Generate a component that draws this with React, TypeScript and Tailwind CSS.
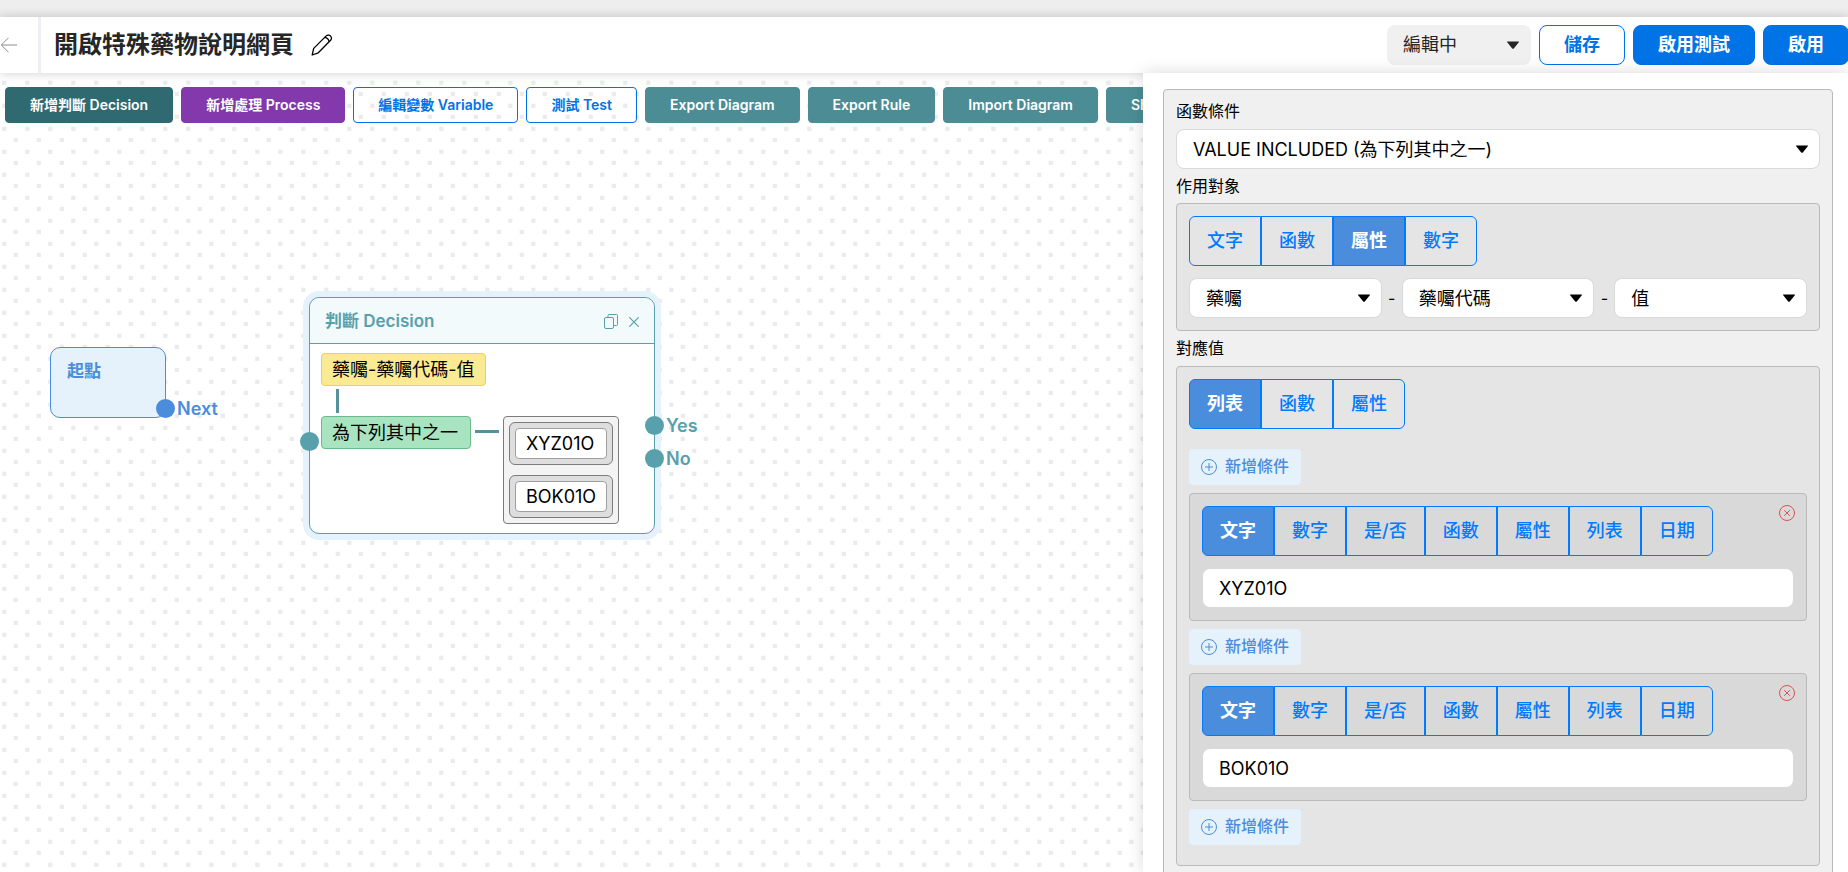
import React, { useState } from 'react';

function Caret({ className = 'text-black' }: { className?: string }) {
  return (
    <svg aria-hidden="true" viewBox="0 0 12 8" className={`pointer-events-none absolute right-3 top-1/2 h-2 w-3 -translate-y-1/2 ${className}`}>
      <path d="M0.4 0.4h11.2c0.4 0 0.5 0.5 0.2 0.9L7 7.2c-0.6 0.8-1.4 0.8-2 0L0.2 1.3C-0.1 0.9 0 0.4 0.4 0.4z" fill="currentColor" />
    </svg>
  );
}

function SelectBox({ label, options }: { label: string; options: string[] }) {
  return (
    <div className="relative min-w-0 flex-1">
      <select aria-label={label} className="block h-10 w-full appearance-none rounded-lg border border-[#d9d9d9] bg-white pl-4 pr-8 pt-0.5 text-lg leading-6 text-black">
        {options.map((o) => (
          <option key={o}>{o}</option>
        ))}
      </select>
      <Caret />
    </div>
  );
}

function Tabs({ items, initial }: { items: string[]; initial: string }) {
  const [active, setActive] = useState(initial);
  return (
    <div className="flex">
      {items.map((t) => (
        <button
          key={t}
          type="button"
          aria-pressed={t === active}
          onClick={() => setActive(t)}
          className={`h-[50px] border border-[#007bff] px-[17px] text-lg first:rounded-l-md last:rounded-r-md ${
            t === active ? 'bg-[#4a8ddc] font-bold text-white' : 'font-medium text-[#007bff]'
          }`}
        >
          {t}
        </button>
      ))}
    </div>
  );
}

function AddButton() {
  return (
    <button type="button" className="flex h-9 items-center gap-2 self-start rounded bg-[#e5f1fb] px-3 text-base font-medium text-[#4a8ddc]">
      <svg aria-hidden="true" viewBox="0 0 16 16" className="h-4 w-4" fill="none" stroke="currentColor">
        <circle cx="8" cy="8" r="7.5" />
        <path d="M8 4v8M4 8h8" />
      </svg>
      <span className="pb-0.5">新增條件</span>
    </button>
  );
}

const VALUE_TYPES = ['文字', '數字', '是/否', '函數', '屬性', '列表', '日期'];

function ConditionCard({ value }: { value: string }) {
  return (
    <div className="relative flex flex-col gap-3 rounded border border-[#bababa] bg-[#d9d9d9] p-3">
      <Tabs items={VALUE_TYPES} initial="文字" />
      <input aria-label="條件值" defaultValue={value} className="h-10 w-full rounded-lg border border-[#d9d9d9] bg-white px-4 text-lg text-black" />
      <button type="button" aria-label="刪除條件" className="absolute right-[11px] top-[11px] text-[#d9534f]">
        <svg aria-hidden="true" viewBox="0 0 16 16" className="block h-4 w-4" fill="none" stroke="currentColor">
          <circle cx="8" cy="8" r="7.5" />
          <path d="M5.2 5.2l5.6 5.6M10.8 5.2l-5.6 5.6" />
        </svg>
      </button>
    </div>
  );
}

function Header() {
  return (
    <header className="relative z-10 flex h-14 shrink-0 items-stretch bg-white shadow-[0_0_10px_rgba(0,0,0,0.2)]">
      <a href="#back" aria-label="返回" className="flex w-[38px] items-center text-[#8c8c8c]">
        <svg aria-hidden="true" viewBox="0 0 18 16" className="h-4 w-[18px]" fill="none" stroke="currentColor">
          <path d="M17 8H1.5M8.5 0.8L1.3 8l7.2 7.2" />
        </svg>
      </a>
      <div className="w-[3px] bg-[#eeeef5]" />
      <div className="flex flex-1 items-center gap-[17px] pl-[13px]">
        <h1 className="whitespace-nowrap text-2xl font-bold text-[#262626]">開啟特殊藥物說明網頁</h1>
        <button type="button" aria-label="編輯名稱" className="text-black">
          <svg aria-hidden="true" viewBox="0 0 22 22" className="block h-[22px] w-[22px]" fill="none" stroke="currentColor" strokeWidth="1.3" strokeLinejoin="round">
            <path d="M1.2 21l1.500-6.600L15.200 1.900a3 3 0 0 1 2.900-0.700c1.600 0.500 2.800 2.300 2.200 3.900a3 3 0 0 1-0.700 1.100L7.300 18.800z" />
            <path d="M13.700 3.400c2.200 0.300 4 2 4.400 4.300" />
          </svg>
        </button>
      </div>
      <div className="-mr-px flex items-center gap-2">
        <div className="relative w-36">
          <select aria-label="狀態" className="block h-10 w-full appearance-none rounded-lg bg-[#f0f0f0] pl-4 pr-8 text-lg leading-6 text-[#262626]">
            <option>編輯中</option>
          </select>
          <Caret className="text-[#262626]" />
        </div>
        <button type="button" className="h-10 rounded-lg border border-[#0073e6] bg-white px-6 text-lg font-bold text-[#0073e6]">儲存</button>
        <button type="button" className="h-10 rounded-lg border border-[#0073e6] bg-[#0073e6] px-6 text-lg font-bold text-white">啟用測試</button>
        <button type="button" className="h-10 rounded-lg border border-[#0073e6] bg-[#0073e6] px-6 text-lg font-bold text-white">啟用</button>
      </div>
    </header>
  );
}

const TOOLS: { label: string; style: string }[] = [
  { label: '新增判斷 Decision', style: 'border-[#2f6a70] bg-[#2f6a70] text-white' },
  { label: '新增處理 Process', style: 'border-[#8338ab] bg-[#8338ab] text-white' },
  { label: '編輯變數 Variable', style: 'border-[#0073e6] text-[#0073e6]' },
  { label: '測試 Test', style: 'border-[#0073e6] text-[#0073e6]' },
  { label: 'Export Diagram', style: 'border-[#4c8d95] bg-[#4c8d95] text-white' },
  { label: 'Export Rule', style: 'border-[#4c8d95] bg-[#4c8d95] text-white' },
  { label: 'Import Diagram', style: 'border-[#4c8d95] bg-[#4c8d95] text-white' },
  { label: 'Show', style: 'border-[#4c8d95] bg-[#4c8d95] text-white' },
];

function Tag({ value }: { value: string }) {
  return (
    <div className="rounded-md border border-[#7c7c7c] bg-[#dedede] p-[5px]">
      <div className="rounded-sm border border-[#a0a0a0] bg-white px-2.5 leading-[29px]">{value}</div>
    </div>
  );
}

function StartNode() {
  return (
    <div className="absolute left-[50px] top-[274px] h-[71px] w-[116px] rounded-[10px] border border-[#4a8ddc] bg-[#e5f1fb] px-4 py-[11px] text-[#4a8ddc]">
      <div className="text-[17px] font-bold leading-6">起點</div>
      <span className="absolute -right-[10px] top-[51px] h-[19px] w-[19px] rounded-full bg-[#4a8ddc]" />
      <span className="absolute left-[126px] top-[49px] text-lg font-semibold leading-6">Next</span>
    </div>
  );
}

function DecisionNode() {
  return (
    <div className="absolute left-[309px] top-[224px] h-[237px] w-[346px] rounded-[10px] border border-[#57a0ac] bg-white shadow-[0_0_0_6px_#e5f1fb]">
      <div className="flex h-[46px] items-center rounded-t-[10px] border-b border-[#57a0ac] bg-[#f3fafc] pl-[15px] pr-[15px] pt-0.5 text-[#57a0ac]">
        <h2 className="flex-1 text-[17px] font-semibold">判斷 Decision</h2>
        <button type="button" aria-label="複製" className="mr-[11px]">
          <svg aria-hidden="true" viewBox="0 0 14 15" className="block h-[15px] w-[14px]" fill="none" stroke="currentColor">
            <rect x="0.5" y="3.5" width="9" height="11" rx="1.5" />
            <path d="M4 3.5V1.5a1 1 0 0 1 1-1h7.500a1 1 0 0 1 1 1v9a1 1 0 0 1-1 1H9.500" />
          </svg>
        </button>
        <button type="button" aria-label="關閉">
          <svg aria-hidden="true" viewBox="0 0 10 10" className="block h-2.5 w-2.5" fill="none" stroke="currentColor" strokeWidth="1.2">
            <path d="M0.300 0.300l9.400 9.400M9.700 0.300L0.300 9.700" />
          </svg>
        </button>
      </div>
      <div className="flex flex-col items-start pl-[11px] pt-[9px] text-lg text-black">
        <div className="rounded-sm border border-[#f4d04a] bg-[#f9ea93] px-2.5 leading-[31px]">藥囑-藥囑代碼-值</div>
        <div className="my-[3px] ml-[15px] h-6 w-[3px] bg-[#57929b]" />
        <div className="flex items-start">
          <div className="rounded-sm border border-[#6cb98b] bg-[#a9e4c0] pl-2.5 pr-3 leading-[31px]">為下列其中之一</div>
          <div className="mx-1 mt-[14px] h-[3px] w-6 bg-[#57929b]" />
          <div className="flex flex-col gap-2.5 rounded-sm border border-[#7c7c7c] bg-[#f3f3f3] p-[5px]">
            <Tag value="XYZ01O" />
            <Tag value="BOK01O" />
          </div>
        </div>
      </div>
      <span className="absolute -left-[10px] top-[134px] h-[19px] w-[19px] rounded-full bg-[#57a0ac]" />
      <span className="absolute -right-[10px] top-[118px] h-[19px] w-[19px] rounded-full bg-[#57a0ac]" />
      <span className="absolute -right-[10px] top-[151px] h-[19px] w-[19px] rounded-full bg-[#57a0ac]" />
      <span className="absolute left-[356px] top-[116px] text-lg font-semibold leading-6 text-[#57a0ac]">Yes</span>
      <span className="absolute left-[356px] top-[149px] text-lg font-semibold leading-6 text-[#57a0ac]">No</span>
    </div>
  );
}

function Canvas() {
  return (
    <section className="relative min-w-0 flex-1 overflow-hidden">
      <svg aria-hidden="true" className="absolute inset-0 h-full w-full">
        <defs>
          <pattern id="dots" width="23" height="23" patternUnits="userSpaceOnUse">
            <rect x="2.200" y="7.700" width="4.200" height="4.200" fill="#ebebeb" />
            <rect x="13.700" y="18.800" width="4.200" height="4.200" fill="#ebebeb" />
          </pattern>
        </defs>
        <rect width="100%" height="100%" fill="url(#dots)" />
      </svg>
      <div className="relative flex gap-2 pl-[5px] pt-[14px]">
        {TOOLS.map((t) => (
          <button key={t.label} type="button" className={`h-9 shrink-0 whitespace-nowrap rounded border px-6 text-sm font-semibold ${t.style}`}>
            {t.label}
          </button>
        ))}
      </div>
      <StartNode />
      <DecisionNode />
    </section>
  );
}

function Panel() {
  return (
    <aside className="relative z-20 w-[705px] shrink-0 overflow-hidden bg-white pl-5 pr-[15px] pt-4 shadow-[0_0_16px_rgba(0,0,0,0.15)]">
      <div className="flex flex-col rounded border border-[#bababa] bg-[#f0f0f0] px-3 pb-3 pt-[9px] text-base text-black">
        <div className="mb-1.5 leading-6">函數條件</div>
        <SelectBox label="函數條件" options={['VALUE INCLUDED (為下列其中之一)']} />
        <div className="my-[5px] leading-6">作用對象</div>
        <div className="flex flex-col gap-3 rounded border border-[#bababa] bg-[#e5e5e5] p-3">
          <Tabs items={['文字', '函數', '屬性', '數字']} initial="屬性" />
          <div className="flex items-center">
            <SelectBox label="資料類別" options={['藥囑']} />
            <span className="w-5 text-center">-</span>
            <SelectBox label="資料欄位" options={['藥囑代碼']} />
            <span className="w-5 text-center">-</span>
            <SelectBox label="資料屬性" options={['值']} />
          </div>
        </div>
        <div className="mb-1.5 mt-[5px] leading-6">對應值</div>
        <div className="flex flex-col gap-2 rounded border border-[#bababa] bg-[#e5e5e5] px-3 pb-5 pt-3">
          <div className="mb-3">
            <Tabs items={['列表', '函數', '屬性']} initial="列表" />
          </div>
          <AddButton />
          <ConditionCard value="XYZ01O" />
          <AddButton />
          <ConditionCard value="BOK01O" />
          <AddButton />
        </div>
      </div>
    </aside>
  );
}

export default function App() {
  return (
    <div className="flex h-screen flex-col overflow-hidden bg-white font-['Inter','Noto_Sans_CJK_TC',sans-serif]">
      <div className="h-[17px] shrink-0 bg-[#eeeeee]" />
      <Header />
      <main className="flex min-h-0 flex-1">
        <Canvas />
        <Panel />
      </main>
    </div>
  );
}
